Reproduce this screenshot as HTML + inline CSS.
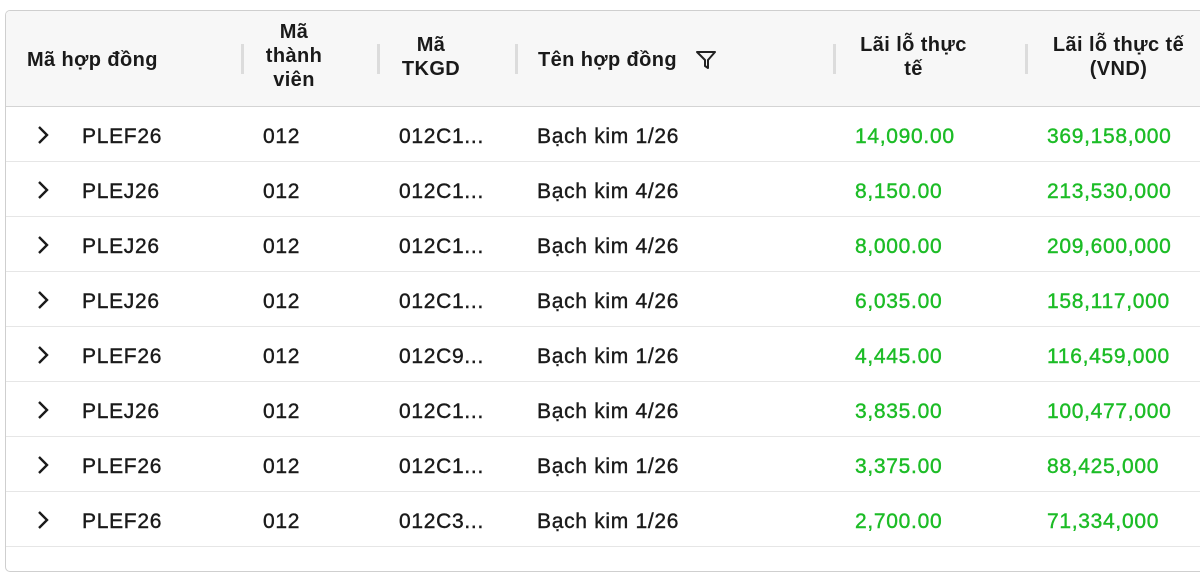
<!DOCTYPE html>
<html><head><meta charset="utf-8"><style>
body{margin:0;background:#fff;width:1200px;height:551px;overflow:hidden;font-family:"Liberation Sans",sans-serif;color:#1a1a1a}
.box{position:absolute;left:5px;top:10px;width:1210px;height:560px;border:1px solid #cfcfcf;border-radius:5px;overflow:hidden}
.hd{position:absolute;left:0;top:0;width:100%;height:95px;background:#f7f7f7;border-bottom:1px solid #d4d4d4}
.h{position:absolute;font-weight:bold;font-size:20px;line-height:24px;text-align:center;letter-spacing:0.4px}
.sep{position:absolute;top:33px;width:3px;height:30px;background:#dcdcdc}
.row{position:absolute;left:0;width:100%;height:54px;border-bottom:1px solid #e6e6e6;font-size:21px;letter-spacing:0.7px;-webkit-text-stroke:0.4px currentColor}
.row span{position:absolute;top:17px;line-height:26px}
.g{color:#1cbc26}
.chev{position:absolute;left:30px;top:18px}
</style></head><body>
<div class="box">
<div class="hd">
<div class="h" style="left:21px;top:37px">Mã hợp đồng</div>
<div class="sep" style="left:235px"></div>
<div class="h" style="left:255px;top:9px;width:66px">Mã<br>thành<br>viên</div>
<div class="sep" style="left:371px"></div>
<div class="h" style="left:392px;top:22px;width:66px">Mã<br>TKGD</div>
<div class="sep" style="left:509px"></div>
<div class="h" style="left:532px;top:37px">Tên hợp đồng</div>
<svg style="position:absolute;left:689px;top:38px" width="22" height="22" viewBox="0 0 22 22"><path d="M2 3H20L13 11V19L10 17V11Z" fill="none" stroke="#222" stroke-width="2" stroke-linejoin="round"/></svg>
<div class="sep" style="left:827px"></div>
<div class="h" style="left:850px;top:22px;width:115px">Lãi lỗ thực<br>tế</div>
<div class="sep" style="left:1019px"></div>
<div class="h" style="left:1040px;top:22px;width:145px">Lãi lỗ thực tế<br>(VND)</div>
</div>
</div>
<script>
var d=[["PLEF26","012C1...","Bạch kim 1/26","14,090.00","369,158,000"],["PLEJ26","012C1...","Bạch kim 4/26","8,150.00","213,530,000"],["PLEJ26","012C1...","Bạch kim 4/26","8,000.00","209,600,000"],["PLEJ26","012C1...","Bạch kim 4/26","6,035.00","158,117,000"],["PLEF26","012C9...","Bạch kim 1/26","4,445.00","116,459,000"],["PLEJ26","012C1...","Bạch kim 4/26","3,835.00","100,477,000"],["PLEF26","012C1...","Bạch kim 1/26","3,375.00","88,425,000"],["PLEF26","012C3...","Bạch kim 1/26","2,700.00","71,334,000"]];
var b=document.querySelector('.box'),h='';
d.forEach(function(r,i){h+='<div class="row" style="top:'+(96+i*55)+'px"><svg class="chev" width="14" height="20" viewBox="0 0 14 20"><path d="M3 2L11 10L3 18" fill="none" stroke="#1a1a1a" stroke-width="2.4"/></svg><span style="left:76px">'+r[0]+'</span><span style="left:257px">012</span><span style="left:393px">'+r[1]+'</span><span style="left:531px">'+r[2]+'</span><span class="g" style="left:849px">'+r[3]+'</span><span class="g" style="left:1041px">'+r[4]+'</span></div>';});
b.insertAdjacentHTML('beforeend',h);
</script>
</body></html>
